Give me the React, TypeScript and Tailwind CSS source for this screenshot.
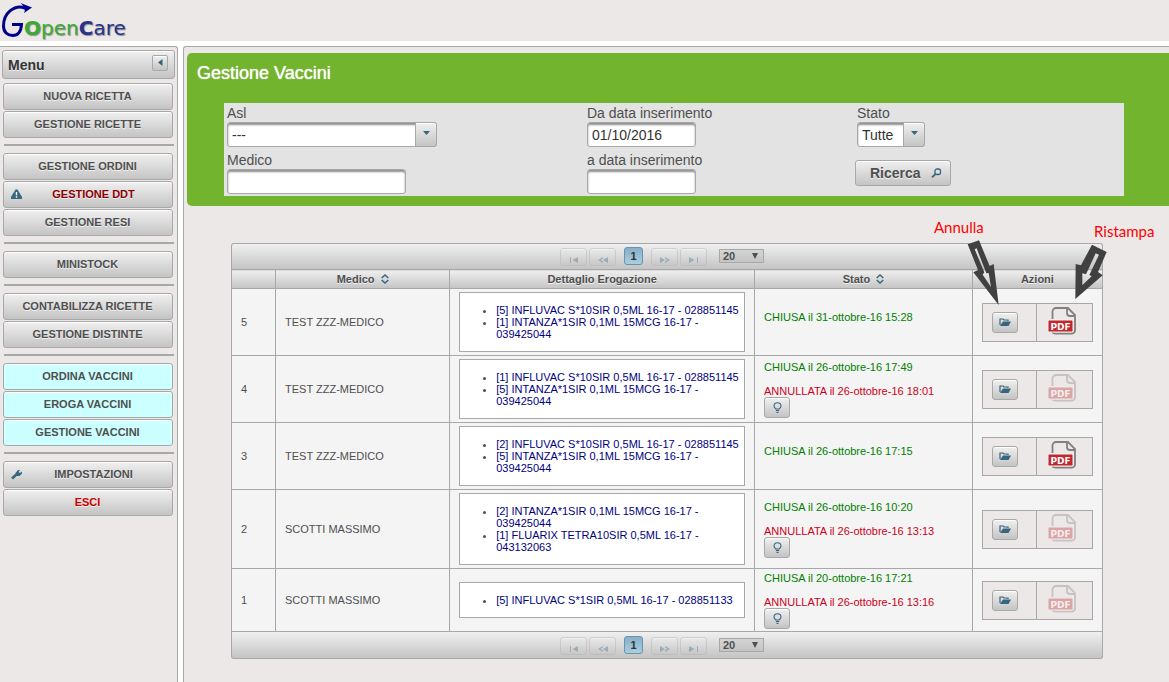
import React from 'react';

type MenuIcon = 'alert' | 'wrench';

interface MenuItem {
  label: string;
  tone?: 'danger' | 'warning' | 'vaccine';
  icon?: MenuIcon;
}

interface Erogation {
  id: number;
  doctor: string;
  items: string[];
  closed: string;
  cancelled?: string;
}

const menuGroups: MenuItem[][] = [
  [{ label: 'NUOVA RICETTA' }, { label: 'GESTIONE RICETTE' }],
  [{ label: 'GESTIONE ORDINI' }, { label: 'GESTIONE DDT', tone: 'warning', icon: 'alert' }, { label: 'GESTIONE RESI' }],
  [{ label: 'MINISTOCK' }],
  [{ label: 'CONTABILIZZA RICETTE' }, { label: 'GESTIONE DISTINTE' }],
  [
    { label: 'ORDINA VACCINI', tone: 'vaccine' },
    { label: 'EROGA VACCINI', tone: 'vaccine' },
    { label: 'GESTIONE VACCINI', tone: 'vaccine' },
  ],
  [{ label: 'IMPOSTAZIONI', icon: 'wrench' }, { label: 'ESCI', tone: 'danger' }],
];

const erogations: Erogation[] = [
  {
    id: 5,
    doctor: 'TEST ZZZ-MEDICO',
    items: ['[5] INFLUVAC S*10SIR 0,5ML 16-17 - 028851145', '[1] INTANZA*1SIR 0,1ML 15MCG 16-17 - 039425044'],
    closed: '31-ottobre-16 15:28',
  },
  {
    id: 4,
    doctor: 'TEST ZZZ-MEDICO',
    items: ['[1] INFLUVAC S*10SIR 0,5ML 16-17 - 028851145', '[5] INTANZA*1SIR 0,1ML 15MCG 16-17 - 039425044'],
    closed: '26-ottobre-16 17:49',
    cancelled: '26-ottobre-16 18:01',
  },
  {
    id: 3,
    doctor: 'TEST ZZZ-MEDICO',
    items: ['[2] INFLUVAC S*10SIR 0,5ML 16-17 - 028851145', '[5] INTANZA*1SIR 0,1ML 15MCG 16-17 - 039425044'],
    closed: '26-ottobre-16 17:15',
  },
  {
    id: 2,
    doctor: 'SCOTTI MASSIMO',
    items: ['[2] INTANZA*1SIR 0,1ML 15MCG 16-17 - 039425044', '[1] FLUARIX TETRA10SIR 0,5ML 16-17 - 043132063'],
    closed: '26-ottobre-16 10:20',
    cancelled: '26-ottobre-16 13:13',
  },
  {
    id: 1,
    doctor: 'SCOTTI MASSIMO',
    items: ['[5] INFLUVAC S*1SIR 0,5ML 16-17 - 028851133'],
    closed: '20-ottobre-16 17:21',
    cancelled: '26-ottobre-16 13:16',
  },
];

const raised =
  'border border-[#a8a8a8] bg-linear-to-b from-[#f0f0f0] to-[#c4c4c4] shadow-[inset_0_1px_0_#ffffff] [text-shadow:0_1px_0_rgba(255,255,255,0.7)]';
const field =
  'h-[25px] rounded-[3px] border border-[#a8a8a8] bg-white px-1 text-sm text-[#333333] shadow-[inset_0_2px_2px_#8f8f8f] outline-none';

const Logo: React.FC = () => (
  <a href="#" aria-label="GOpenCare" className="flex h-[41px] items-start">
    <svg width="32" height="41" viewBox="0 0 32 41" className="shrink-0">
      <path
        d="M24 7.500C14 5 3.500 13 3.500 26c0 6 4 9.500 9 9.500 5 0 8.500-3 9-11H12"
        fill="none"
        stroke="#00008b"
        strokeWidth="3"
      />
      <path d="M20.500 3L32 7.500 24 13l1-3-5-2.500 3-2z" fill="#00008b" />
    </svg>
    <span className="-ml-2 mt-4 font-['DejaVu_Sans'] text-xl leading-6 [text-shadow:1px_1px_1px_#8f8f8f]">
      <span className="font-bold text-[#3aaa35]">O</span>
      <span className="text-[#3aaa35]">pen</span>
      <span className="font-bold text-[#27348b]">C</span>
      <span className="text-[#27348b]">are</span>
    </span>
  </a>
);

const MenuGlyph: React.FC<{ name: MenuIcon }> = ({ name }) =>
  name === 'alert' ? (
    <svg width="12" height="12" viewBox="0 0 12 12" className="shrink-0">
      <path d="M4.500 1.500h2L11 9v2H0V9z" fill="#38667f" />
      <path d="M5.500 4v3.200M5.500 8.200v1.500" stroke="#ffffff" strokeWidth="1.400" />
    </svg>
  ) : (
    <svg width="12" height="12" viewBox="0 0 12 12" className="shrink-0">
      <path d="M1 10.500L6 6" stroke="#38667f" strokeWidth="2.600" />
      <path d="M4.500 5l2.500-3h2L7.500 4l1.500 1 2-1.500v2L8.500 8H6z" fill="#38667f" />
    </svg>
  );

const MenuButton: React.FC<{ item: MenuItem }> = ({ item }) => {
  const getTone = (): string => {
    switch (item.tone) {
      case 'danger':
        return 'text-[#cc0000]';
      case 'warning':
        return 'text-[#8b0000]';
      default:
        return 'text-[#4f4f4f]';
    }
  };
  const surface =
    item.tone === 'vaccine' ? 'border border-[#a8a8a8] bg-[#ccffff] shadow-[inset_0_1px_0_#ffffff]' : raised;

  return (
    <button
      type="button"
      className={`mr-px flex h-[27px] items-center rounded-[3px] pr-2 pb-0.5 pl-[7px] text-[11px] leading-3 font-bold ${surface} ${getTone()}`}
    >
      {item.icon && <MenuGlyph name={item.icon} />}
      <span className="flex-1 text-center">{item.label}</span>
    </button>
  );
};

const Sidebar: React.FC = () => (
  <aside className="w-[178px] shrink-0 rounded-tr-[3px] border-t border-r border-[#a8a8a8] bg-[#ece8e7] pt-[3px]">
    <div className={`mx-0.5 flex h-[29px] items-center justify-between rounded-[3px] pr-1.5 pl-[5px] ${raised}`}>
      <h2 className="text-sm font-bold text-[#333333]">Menu</h2>
      <button
        type="button"
        aria-label="Chiudi menu"
        className={`mb-1 flex size-4 items-center justify-center rounded-[2px] ${raised}`}
      >
        <svg width="5" height="7" viewBox="0 0 5 7">
          <path d="M4.500 0v7L0 3.500z" fill="#38667f" />
        </svg>
      </button>
    </div>
    <nav className="mt-1 flex flex-col gap-px px-[3px]">
      {menuGroups.map((group, idx) => (
        <React.Fragment key={idx}>
          {idx > 0 && <hr className="mt-[5px] mb-1.5 ml-px h-0.5 border-0 bg-[#a8a8a8]" />}
          {group.map((item) => (
            <MenuButton key={item.label} item={item} />
          ))}
        </React.Fragment>
      ))}
    </nav>
  </aside>
);

interface SelectBoxProps {
  id: string;
  value: string;
  width: string;
}

const SelectBox: React.FC<SelectBoxProps> = ({ id, value, width }) => (
  <div className={`relative ${width}`}>
    <select id={id} className={`block w-full appearance-none ${field}`}>
      <option>{value}</option>
    </select>
    <span
      className={`pointer-events-none absolute top-0 right-0 flex h-[25px] w-[22px] items-center justify-center rounded-r-[3px] pb-1 ${raised}`}
    >
      <svg width="7" height="4" viewBox="0 0 7 4">
        <path d="M0 0h7L3.500 4z" fill="#38667f" />
      </svg>
    </span>
  </div>
);

const labelText = 'block text-sm leading-[18px] text-[#4f4f4f]';

const SearchPanel: React.FC = () => (
  <section className="rounded-l-[5px] bg-[#72b42d] pt-2.5 pr-[45px] pb-2.5 pl-2.5">
    <h1 className="text-lg leading-5 text-white [text-shadow:0_0_1px_#ffffff]">Gestione Vaccini</h1>
    <form className="mt-5 ml-[27px] grid grid-cols-[4fr_3fr_3fr] bg-[#e3e3e3] pt-px pb-0.5">
      <div className="flex flex-col gap-1 pl-[3px]">
        <div>
          <label htmlFor="asl" className={labelText}>Asl</label>
          <SelectBox id="asl" value="---" width="w-[210px]" />
        </div>
        <div>
          <label htmlFor="medico" className={labelText}>Medico</label>
          <input id="medico" type="text" className={`block w-[179px] ${field}`} />
        </div>
      </div>
      <div className="flex flex-col gap-1 pl-[3px]">
        <div>
          <label htmlFor="from" className={labelText}>Da data inserimento</label>
          <input id="from" type="text" defaultValue="01/10/2016" className={`block w-[109px] ${field}`} />
        </div>
        <div>
          <label htmlFor="to" className={labelText}>a data inserimento</label>
          <input id="to" type="text" className={`block w-[109px] ${field}`} />
        </div>
      </div>
      <div className="pl-px">
        <div className="pl-0.5">
          <label htmlFor="stato" className={labelText}>Stato</label>
          <SelectBox id="stato" value="Tutte" width="w-[68px]" />
        </div>
        <button
          type="button"
          className={`mt-[13px] flex h-[26px] items-center gap-2.5 rounded-[3px] pr-2 pl-3.5 text-sm font-bold text-[#4f4f4f] ${raised}`}
        >
          Ricerca
          <svg width="11" height="10" viewBox="0 0 11 10" fill="none" stroke="#38667f">
            <rect x="4" y="1" width="5.500" height="5.500" rx="2" strokeWidth="1.300" />
            <path d="M4.500 6L1 9.300" strokeWidth="1.800" />
          </svg>
        </button>
      </div>
    </form>
  </section>
);

const pagerPaths = {
  first: 'M1 1h1v6H1zM9 1v6L3.500 4z',
  prev: 'M5 1v1.500L2.500 4 5 5.500V7L0 4zM10 1v6L5 4z',
  next: 'M0 1v6l5-3zM5 1v1.500L7.500 4 5 5.500V7l5-3z',
  last: 'M0 1v6l5.500-3zM8 1h1v6H8z',
};

const PagerButton: React.FC<{ kind: keyof typeof pagerPaths; label: string }> = ({ kind, label }) => (
  <button
    type="button"
    disabled
    aria-label={label}
    className={`flex h-[18px] w-[27px] items-center justify-center rounded-[3px] pt-1 opacity-35 ${raised}`}
  >
    <svg width="10" height="7" viewBox="0 0 10 7">
      <path d={pagerPaths[kind]} fill="#38667f" />
    </svg>
  </button>
);

const Paginator: React.FC<{ edge: 'top' | 'bottom' }> = ({ edge }) => (
  <div
    className={`flex items-start justify-center bg-linear-to-b from-[#f0f0f0] to-[#c4c4c4] pr-2.5 text-[#4f4f4f] ${
      edge === 'top'
        ? 'h-[26px] rounded-t-[3px] border border-b-0 border-[#a8a8a8] pt-[3px]'
        : 'h-[27px] rounded-b-[3px] border border-t-0 border-[#a8a8a8] pt-1'
    }`}
  >
    <div className="mt-px flex gap-0.5">
      <PagerButton kind="first" label="Prima pagina" />
      <PagerButton kind="prev" label="Pagina precedente" />
    </div>
    <button
      type="button"
      className="mx-2 h-[18px] w-[19px] rounded-[3px] border border-[#6a94ab] bg-linear-to-b from-[#86aec6] to-[#a9cfe0] text-[11px] leading-4 font-bold text-[#333333]"
    >
      1
    </button>
    <div className="mt-px flex gap-0.5">
      <PagerButton kind="next" label="Pagina successiva" />
      <PagerButton kind="last" label="Ultima pagina" />
    </div>
    <div className="relative mt-0.5 ml-3">
      <select
        aria-label="Righe per pagina"
        className="block h-3.5 w-[45px] appearance-none border border-[#a8a8a8] bg-linear-to-b from-[#d4d4d4] to-[#c4c4c4] pl-[3px] text-[11px] leading-3 font-bold outline-none"
      >
        <option>20</option>
      </select>
      <svg width="6" height="6" viewBox="0 0 6 6" className="pointer-events-none absolute top-1 right-1.5">
        <path d="M0 0h6L3 6z" fill="#4f4f4f" />
      </svg>
    </div>
  </div>
);

const SortIcon: React.FC = () => (
  <svg width="8" height="10" viewBox="0 0 8 10" fill="none" stroke="#38667f" strokeWidth="1.500">
    <path d="M0.700 4L4 1l3.300 3M0.700 6L4 9l3.300-3" />
  </svg>
);

const smallButton = `flex h-[21px] w-[26px] items-center justify-center rounded-[3px] ${raised}`;

const PdfIcon: React.FC<{ faded: boolean }> = ({ faded }) => (
  <svg width="28" height="28" viewBox="0 0 28 28" className={faded ? 'opacity-35' : undefined}>
    <path
      d="M4.500 12V4.500a3.500 3.500 0 0 1 3.500-3.500H20l7 7v15.500a3 3 0 0 1-3 3H8q-3.500 0-3.500-1.500M19 1.500V6q0 3 3 3h4.500"
      fill="none"
      stroke="#808080"
      strokeWidth="1.800"
    />
    <rect x="0" y="13" width="25" height="12" rx="1.500" fill="#c1272d" stroke="#f4f0ef" strokeWidth="1" />
    <text
      x="12.500"
      y="22.500"
      textAnchor="middle"
      fill="#ffffff"
      className="font-['DejaVu_Sans'] text-[9px] font-bold"
    >
      PDF
    </text>
  </svg>
);

const RowActions: React.FC<{ cancelled: boolean }> = ({ cancelled }) => (
  <div className="mx-auto grid h-[39px] w-[111px] grid-cols-2 border border-[#a8a8a8] bg-[#ece8e7]">
    <div className="flex items-center border-r border-[#a8a8a8] pl-[9px]">
      <button type="button" aria-label="Annulla" className={smallButton}>
        <svg width="12" height="8" viewBox="0 0 12 8">
          <path d="M1 7V1h3l1 1h4v1" fill="none" stroke="#38667f" strokeWidth="1.200" />
          <path d="M4 3.500h8L9.500 8H1z" fill="#38667f" />
        </svg>
      </button>
    </div>
    <div className="flex items-start pt-[3px] pl-[11px]">
      <button type="button" aria-label="Ristampa" disabled={cancelled}>
        <PdfIcon faded={cancelled} />
      </button>
    </div>
  </div>
);

const ErogationRow: React.FC<{ row: Erogation }> = ({ row }) => (
  <tr>
    <td className="border border-[#a8a8a8] px-[9px]">{row.id}</td>
    <td className="border border-[#a8a8a8] px-[9px]">{row.doctor}</td>
    <td className="border border-[#a8a8a8] px-[9px] py-[3px]">
      <ul className="list-disc border border-[#a8a8a8] bg-white py-[11px] pl-9">
        {row.items.map((item) => (
          <li key={item}>
            <span className="text-[#000080]">{item}</span>
          </li>
        ))}
      </ul>
    </td>
    <td className="border border-[#a8a8a8] px-[9px] pt-[3px] pb-0.5">
      <p className="mb-3 text-[#008000]">CHIUSA il {row.closed}</p>
      {row.cancelled && (
        <>
          <p className="text-[#cc0022]">ANNULLATA il {row.cancelled}</p>
          <button type="button" aria-label="Motivo annullamento" className={smallButton}>
            <svg width="9" height="11" viewBox="0 0 9 11" fill="none" stroke="#38667f">
              <path d="M3 7Q1 5.500 1 4a3.500 3.300 0 0 1 7 0Q8 5.500 6 7z" strokeWidth="1.100" />
              <path d="M2.800 8.500h3.400M3.500 10.300h2" strokeWidth="1.200" />
            </svg>
          </button>
        </>
      )}
    </td>
    <td className="border border-[#a8a8a8]">
      <RowActions cancelled={Boolean(row.cancelled)} />
    </td>
  </tr>
);

const headCell =
  'h-[19px] border border-[#a8a8a8] bg-linear-to-b from-[#f0f0f0] to-[#c4c4c4] p-0 text-center font-bold [text-shadow:0_1px_0_rgba(255,255,255,0.7)]';

// hand-placed hints that point at the action icons of the first row
const ActionHints: React.FC = () => (
  <div className="pointer-events-none absolute -top-[33px] -right-[66px] h-[95px] w-[249px] font-['Lato'] text-[15px] leading-[18px] text-[#ff0000]">
    <span className="absolute top-2 left-3.5">Annulla</span>
    <span className="absolute top-3 left-[174px]">Ristampa</span>
    <svg width="249" height="96" viewBox="0 0 747 288" fill="#404040" fillRule="evenodd">
      <path d="M143 103L177 91 209 168 221 162 236 285 160 187 174 180zM164 118L193 187 188 194 213 231 206 189 199 190 170 115z" />
      <path d="M516 104L560 126 534 186 548 196 466 267 467 162 483 166zM527 130L498 193 487 190 487 226 515 199 508 195 537 134z" />
    </svg>
  </div>
);

const ErogationTable: React.FC = () => (
  <section className="relative mt-[37px] mr-[66px] ml-11 text-[11px] leading-3 text-[#4f4f4f]">
    <Paginator edge="top" />
    <table className="w-full table-fixed border-collapse bg-[#f4f4f4]">
      <thead>
        <tr>
          <th className={`w-11 ${headCell}`}></th>
          <th className={`w-[20%] ${headCell}`}>
            <span className="flex items-center justify-center gap-1.5">Medico <SortIcon /></span>
          </th>
          <th className={`w-[35%] ${headCell}`}>Dettaglio Erogazione</th>
          <th className={`w-[25%] ${headCell}`}>
            <span className="flex items-center justify-center gap-1.5">Stato <SortIcon /></span>
          </th>
          <th className={headCell}>Azioni</th>
        </tr>
      </thead>
      <tbody>
        {erogations.map((row) => (
          <ErogationRow key={row.id} row={row} />
        ))}
      </tbody>
    </table>
    <Paginator edge="bottom" />
    <ActionHints />
  </section>
);

const App: React.FC = () => (
  <div className="flex min-h-screen flex-col overflow-x-hidden bg-white font-['Liberation_Sans',Arial,sans-serif]">
    <header className="h-[41px] bg-[#ece8e7]">
      <Logo />
    </header>
    <div className="mt-[5px] flex flex-1 gap-[5px]">
      <Sidebar />
      <main className="min-w-0 flex-1 rounded-tl-[3px] border-t border-l border-[#a8a8a8] bg-[#ece8e7] pt-1.5 pb-5 pl-[3px]">
        <SearchPanel />
        <ErogationTable />
      </main>
    </div>
  </div>
);

export default App;
